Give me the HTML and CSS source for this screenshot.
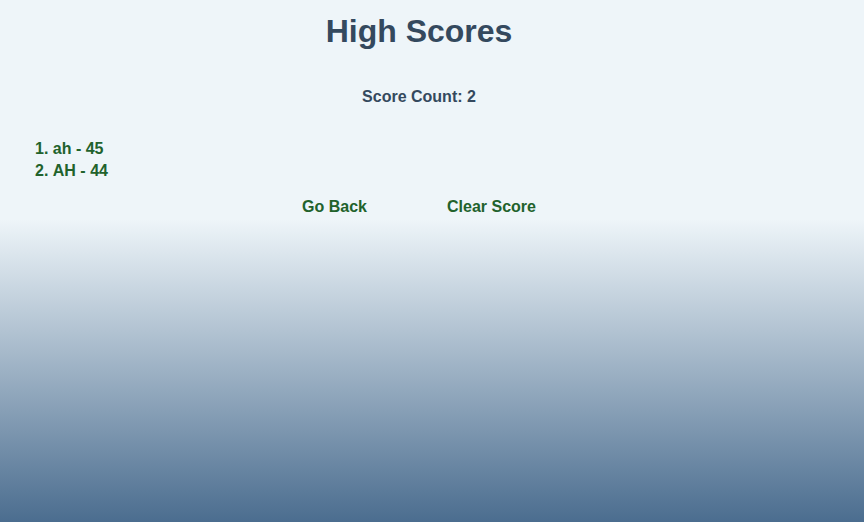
FILE: index.html
```html
<!DOCTYPE html>
<html lang="en">
<head>
<meta charset="utf-8">
<title>High Scores</title>
<link rel="stylesheet" href="styles.css">
</head>
<body>
<main class="page">
  <h1 class="title">High Scores</h1>
  <p class="count">Score Count: 2</p>
  <ol class="scores">
    <li>ah - 45</li>
    <li>AH - 44</li>
  </ol>
  <div class="actions">
    <button class="btn">Go Back</button>
    <button class="btn">Clear Score</button>
  </div>
</main>
</body>
</html>
```
FILE: styles.css
```css
html, body {
  margin: 0;
  height: 100%;
}
body {
  min-height: 522px;
  background: linear-gradient(180deg, #eef5f9 0%, #eef5f9 42%, #4b6d8f 100%);
  font-family: "Liberation Sans", Arial, sans-serif;
  font-weight: bold;
}
.page {
  padding: 0 35px 0 9px;
}
.title {
  margin: 13px 0 0;
  font-size: 32px;
  line-height: 37px;
  text-align: center;
  color: #34495e;
}
.count {
  margin: 38px 0 0;
  font-size: 16px;
  line-height: 18px;
  text-align: center;
  color: #34495e;
}
.scores {
  margin: 32px 0 0;
  padding: 0 0 0 26px;
  list-style: decimal inside;
  color: #21622c;
  font-size: 16px;
  line-height: 22px;
}
.actions {
  margin-top: 16px;
  display: flex;
  justify-content: center;
}
.btn {
  border: none;
  background: none;
  padding: 0 40px;
  font-family: inherit;
  font-weight: bold;
  font-size: 16px;
  line-height: 18px;
  color: #21622c;
  cursor: pointer;
}
```
